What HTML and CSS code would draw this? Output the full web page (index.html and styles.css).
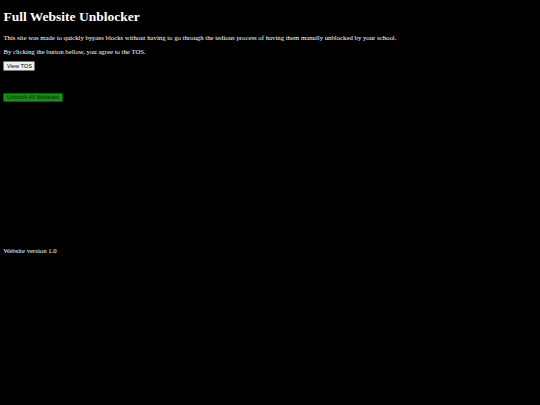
FILE: index.html
```html
<!DOCTYPE html>
<html lang="en">
<head>
<meta charset="utf-8">
<title>Full Website Unblocker</title>
<link rel="stylesheet" href="styles.css">
</head>
<body>
<h1 class="title">Full Website Unblocker</h1>
<p class="text">This site was made to quickly bypass blocks without having to go through the tedious process of having them manully unblocked by your school.</p>
<p class="text">By clicking the button bellow, you agree to the TOS.</p>
<div class="row"><button class="btn">View TOS</button></div>
<div class="row row-unblock"><button class="btn btn-green">Unblock All Websites</button></div>
<p class="text version">Website version 1.0</p>
</body>
</html>
```

FILE: styles.css
```css
html {
  background: #000;
}
body {
  margin: 3.4px;
  background: #000;
  color: #fff;
  font-family: "Liberation Serif", "Times New Roman", serif;
}
.title {
  font-size: 13.5px;
  font-weight: bold;
  margin: 5.5px 0 9px;
}
.text {
  font-size: 6.75px;
  margin: 6.75px 0;
}
.row {
  line-height: 0;
}
.btn {
  box-sizing: border-box;
  height: 9.2px;
  font-family: "Liberation Sans", Arial, sans-serif;
  font-size: 5.6px;
  line-height: 6.4px;
  padding: 0 2.6px;
  background: #efefef;
  color: #000;
  border: 0.8px solid #767676;
  border-radius: 1.2px;
  margin: 0;
}
.row-unblock {
  margin-top: 22.5px;
}
.btn-green {
  background: #1a8a1a;
  border-color: #0d5e0d;
  color: #0a2a0a;
}
.version {
  margin-top: 145px;
}
```
